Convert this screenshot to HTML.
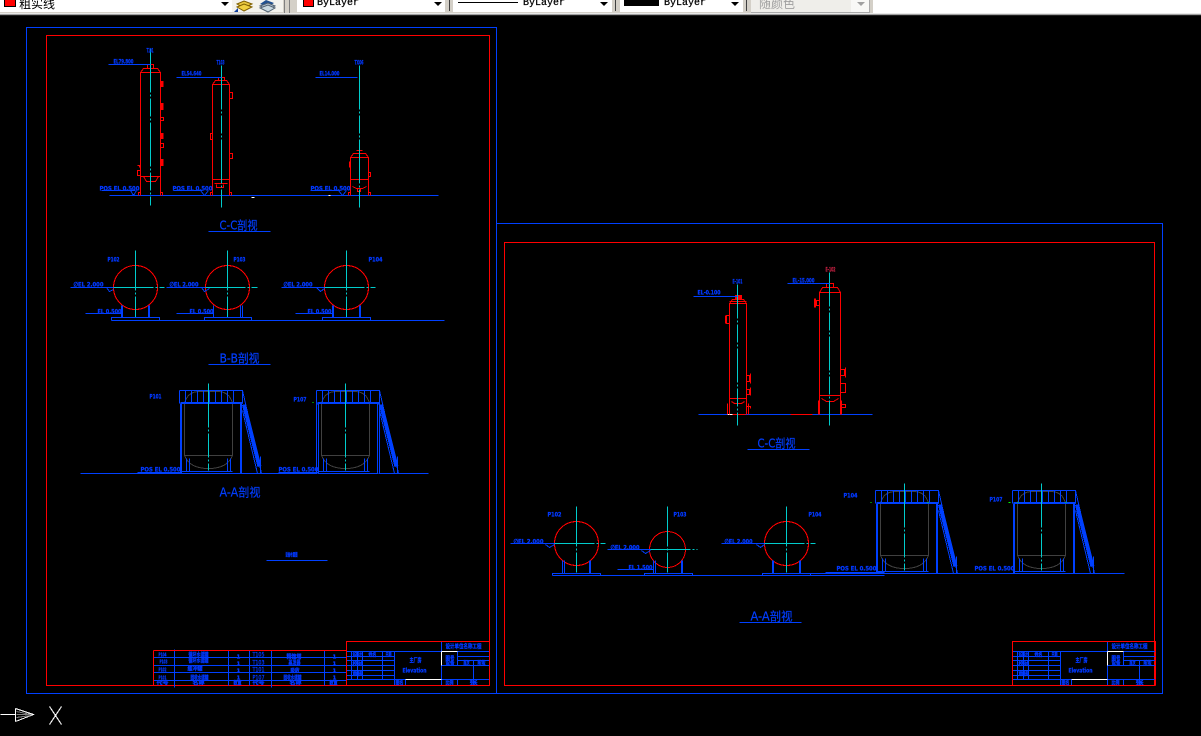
<!DOCTYPE html>
<html lang="zh">
<head>
<meta charset="utf-8">
<title>CAD</title>
<style>
html,body{margin:0;padding:0;background:#000;width:1201px;height:736px;overflow:hidden}
#tb{position:absolute;left:0;top:0;width:1201px;height:16px;background:#fff;overflow:hidden}
#tb div{position:absolute}
.g{background:#d4d0c8}
.w{background:#fff}
.ar{width:0;height:0;border-left:4px solid transparent;border-right:4px solid transparent;border-top:4px solid #000;top:2px}
.bl{font:10px/10px "Liberation Mono",monospace;color:#000;top:-1px;white-space:nowrap;-webkit-text-stroke:.25px #000}
svg{position:absolute;left:0;top:0}
text{font-family:"DejaVu Sans","Noto Sans CJK SC",sans-serif;fill:#0038ff;stroke:#0038ff;stroke-width:.3px;font-size:6.5px;font-weight:bold}
text.t{font-weight:normal;font-size:12px;stroke-width:.2px;fill:#0040ff}
</style>
</head>
<body>
<div id="tb">
  <div class="g" style="left:0;top:0;width:873px;height:14px"></div>
  <div class="w" style="left:0;top:0;width:232px;height:12px"></div>
  <div style="left:4px;top:0;width:10px;height:6px;background:#f00;border:1px solid #000;border-top:0;box-sizing:content-box"></div>
  <div style="left:19px;top:-3px;font:12px/14px 'WenQuanYi Zen Hei','Noto Sans CJK SC',sans-serif;color:#000;white-space:nowrap">粗实线</div>
  <div class="ar" style="left:221px"></div>
  <div style="left:232px;top:0;width:51px;height:12px;background:#f4f3ee"></div>
  <svg width="50" height="14" style="left:232px;top:0">
    <polygon points="5,4 12,1 20,4 12,8" fill="#e8c840" stroke="#806000"/>
    <polygon points="5,7 12,4 20,7 12,11" fill="#f0d040" stroke="#806000"/>
    <polygon points="2,12 6,8 6,12" fill="#1040a0"/>
    <polygon points="28,4 34,0 42,3 36,7" fill="#205090"/>
    <polygon points="28,6 36,3 43,6 36,10" fill="#b8c8d8" stroke="#506070"/>
    <polygon points="28,8 36,5 43,8 36,12" fill="#c8d8e0" stroke="#506070"/>
  </svg>
  <div style="left:284px;top:0;width:1px;height:14px;background:#808080"></div>
  <div style="left:289px;top:0;width:1px;height:14px;background:#808080"></div>
  <div class="w" style="left:297px;top:0;width:148px;height:12px"></div>
  <div style="left:303px;top:0;width:9px;height:6px;background:#f00;border:1px solid #000;border-top:0"></div>
  <div class="bl" style="left:317px">ByLayer</div>
  <div class="ar" style="left:434px"></div>
  <div style="left:449px;top:0;width:1px;height:11px;background:#404040"></div>
  <div class="w" style="left:453px;top:0;width:159px;height:12px"></div>
  <div style="left:458px;top:2px;width:60px;height:1px;background:#000"></div>
  <div class="bl" style="left:523px">ByLayer</div>
  <div class="ar" style="left:600px"></div>
  <div style="left:615px;top:0;width:1px;height:11px;background:#404040"></div>
  <div class="w" style="left:620px;top:0;width:123px;height:12px"></div>
  <div style="left:624px;top:0;width:35px;height:6px;background:#000"></div>
  <div class="bl" style="left:664px">ByLayer</div>
  <div class="ar" style="left:731px"></div>
  <div style="left:746px;top:0;width:1px;height:11px;background:#404040"></div>
  <div style="left:751px;top:0;width:118px;height:12px;background:#efeeea;border-right:1px solid #aaa;border-bottom:1px solid #aaa"></div>
  <div style="left:759px;top:-3px;font:12px/14px 'WenQuanYi Zen Hei','Noto Sans CJK SC',sans-serif;color:#a0a0a0;white-space:nowrap">随颜色</div>
  <div style="left:851px;top:0;width:18px;height:12px;background:#f8f8f6"></div>
  <div class="ar" style="left:857px;border-top-color:#a0a0a0"></div>
  <div style="left:0;top:13px;width:1201px;height:1px;background:#e8e8e8"></div>
  <div style="left:0;top:14px;width:1201px;height:1px;background:#a0a0a0"></div>
  <div style="left:0;top:15px;width:1201px;height:1px;background:#202020"></div>
</div>

<svg width="1201" height="736" viewBox="0 0 1201 736" style="top:0" shape-rendering="crispEdges">
<defs>
  <g id="tank" fill="none">
    <g stroke="#404040">
      <path d="M5,13Q8,1 20,1L38,1Q50,1 53,13L53,65L5,65L5,13"/>
      <path d="M5,65Q10,78 29,78Q48,78 53,65"/>
    </g>
    <g stroke="#0040ff">
      <path d="M0,0H63V13M0,0V13M6,0V13M12,0V13M18,0V13M24,0V13M30,0V13M36,0V13M42,0V13M48,0V13M54,0V13"/>
      <path d="M1,12.5H63" stroke-width="2"/>
      <path d="M1.5,13V83M61.5,13V83" stroke-width="2"/>
      <path d="M7,68V81M10,68V81M48,68V81M51,68V81M2,81H53"/>
      <path d="M63,0L82,83M81,66V83M63,20L78,83"/>
      <path d="M64.5,14L80,76" stroke-width="4"/>
    </g>
    <path d="M29,-7V80" stroke="#00cccc" stroke-dasharray="44 2 2 2 24 2 2 2"/>
  </g>
  <g id="tblock" fill="none">
    <g stroke="#0040ff">
      <path d="M346,651H489M346,656H394M346,660H394M346,665H394M346,670H394M346,675H394M346,679H489"/>
      <path d="M351,651V679M357,651V679M362,651V679M382,651V679M394,651V685M405,679V685M441,641V685M457,651V665M457,679V685M473,660V679"/>
      <path d="M457,656H489M457,660H489M441,665H489"/>
    </g>
    <path d="M405,679H441M441,651H457M441,651V665" stroke="#fff"/>
    <path d="M346,685V641H489V685M346,685H489" stroke="#f00"/>
    <text x="445" y="648" textLength="36" lengthAdjust="spacingAndGlyphs" style="font-size:6px">设计单位名称工程</text>
    <text x="409" y="662" style="font-size:6px" textLength="12" lengthAdjust="spacingAndGlyphs">主厂房</text>
    <text x="402" y="672" style="font-size:6px" textLength="24" lengthAdjust="spacingAndGlyphs">Elevation</text>
    <text x="445" y="660" style="font-size:6px" textLength="9" lengthAdjust="spacingAndGlyphs">图号</text>
    <text x="445" y="664" style="font-size:5px" textLength="9" lengthAdjust="spacingAndGlyphs">设备</text>
    <text x="368" y="656" style="font-size:5px" textLength="8" lengthAdjust="spacingAndGlyphs">姓名</text>
    <text x="385" y="656" style="font-size:5px" textLength="6" lengthAdjust="spacingAndGlyphs">日期</text>
    <text x="352" y="656" style="font-size:5px" textLength="10" lengthAdjust="spacingAndGlyphs">设计</text>
    <text x="352" y="665" style="font-size:5px" textLength="10" lengthAdjust="spacingAndGlyphs">校对</text>
    <text x="352" y="675" style="font-size:5px" textLength="10" lengthAdjust="spacingAndGlyphs">审核</text>
    <text x="395" y="684" style="font-size:5px" textLength="8" lengthAdjust="spacingAndGlyphs">图名</text>
    <text x="445" y="684" style="font-size:5px" textLength="8" lengthAdjust="spacingAndGlyphs">比例</text>
    <text x="469" y="684" style="font-size:5px" textLength="8" lengthAdjust="spacingAndGlyphs">张</text>
    <text x="463" y="664" style="font-size:5px" textLength="6" lengthAdjust="spacingAndGlyphs">版次</text>
    <text x="477" y="664" style="font-size:5px" textLength="8" lengthAdjust="spacingAndGlyphs">阶段</text>
  </g>
</defs>

<g transform="translate(.5,.5)" fill="none">
  <!-- frames -->
  <rect x="26" y="27" width="470" height="666" stroke="#0040ff"/>
  <rect x="46" y="35" width="443" height="650" stroke="#f00"/>
  <path d="M496,223H1162V693H496" stroke="#0040ff"/>
  <rect x="504" y="242" width="650" height="443" stroke="#f00"/>

  <!-- LEFT: C-C vessels -->
  <path d="M109,195H438" stroke="#0040ff"/>
  <g stroke="#f00">
    <path d="M140,195V72H160V195M140,72L143,68H157L160,72M147,68V64H153V68"/>
    <path d="M140,176H160M143,176L146,181H155L158,176"/>
    <path d="M138,195V192H140M160,192H162V195"/>
    <path d="M160.5,81H162.5V86H160.5ZM160.5,103H162.5V109H160.5ZM160.5,133H162.5V138H160.5ZM160.5,159H162.5V165H160.5Z" fill="#f00"/>
    <path d="M160,117H163V120H160M160,143H163V147H160M137,165H139V167M140,170H137V175H140"/>
    <path d="M212,195V84H229V195M212,84L215,80H226L229,84M218,80V77H224V80"/>
    <path d="M229,92H232V98H229M212,133H210V139H212M229,153H232V158H229"/>
    <path d="M212,179H229M214,183H227M216,184V187H223V184"/>
    <path d="M210,195V192H212M229,192H231V195"/>
    <path d="M350,195V157H368V195M350,157L353,153H365L368,157M356,150H362M359,150V153"/>
    <path d="M349,161V167M368,172H370V176H368"/>
    <path d="M350,179H368M352,186L356,188H362L366,186M357,188V191H360V188"/>
    <path d="M348,195V192H350M368,192H370V195"/>
  </g>
  <g stroke="#00cccc" stroke-dasharray="44 2 2 2 18 2 2 2">
    <path d="M150,48V205"/>
    <path d="M221,65V207"/>
    <path d="M359,65V207"/>
  </g>
  <g stroke="#0040ff">
    <path d="M108,64H150M176,77H221M315,77H357"/>
    <path d="M101,190H135M130,190L133,195L136,190M173,190H202M200,190L204,195L208,190M310,190H340M338,190L342,195L346,190"/>
    <path d="M208,231H270"/>
  </g>
  <path d="M251,197H254M328,195H330" stroke="#fff"/>
  <text x="146" y="52" textLength="7" lengthAdjust="spacingAndGlyphs">T101</text>
  <text x="113" y="63" textLength="20" lengthAdjust="spacingAndGlyphs">EL79.800</text>
  <text x="216" y="64" textLength="8" lengthAdjust="spacingAndGlyphs">T103</text>
  <text x="181" y="75" textLength="20" lengthAdjust="spacingAndGlyphs">EL54.640</text>
  <text x="354" y="64" textLength="9" lengthAdjust="spacingAndGlyphs">TX06</text>
  <text x="319" y="75" textLength="20" lengthAdjust="spacingAndGlyphs">EL14.000</text>
  <text x="99" y="190" textLength="40" lengthAdjust="spacingAndGlyphs">POS EL 0.500</text>
  <text x="172" y="190" textLength="40" lengthAdjust="spacingAndGlyphs">POS EL 0.500</text>
  <text x="310" y="190" textLength="40" lengthAdjust="spacingAndGlyphs">POS EL 0.500</text>
  <text class="t" x="219" y="229" textLength="38" lengthAdjust="spacingAndGlyphs">C-C剖视</text>

  <!-- LEFT: B-B -->
  <g stroke="#f00">
    <circle cx="135" cy="287" r="22"/><circle cx="227" cy="287" r="22"/><circle cx="346" cy="287" r="22"/>
  </g>
  <g stroke="#00cccc" stroke-dasharray="40 2 2 2">
    <path d="M135,250V317M227,250V317M346,250V317"/>
    <path d="M113,287H164M205,287H257M324,287H375"/>
  </g>
  <g stroke="#0040ff">
    <path d="M111,320H444"/>
    <path d="M111,320V317H159V320M204,320V317H251V320M322,320V317H370V320"/>
    <path d="M121.5,305V317M148.5,305V317M332.5,305V317M359.5,305V317" stroke-width="2"/>
    <path d="M213,305V317M240,305V317M242,305V317"/>
    <path d="M70,287H113M106,287L109,291L113,289M166,287H205M201,287L204,291L209,288M281,287H324M316,287L320,291L324,288"/>
    <path d="M85,313H122M176,313H213M295,313H333"/>
    <path d="M208,364H270"/>
  </g>
  <text x="107" y="261" textLength="12" lengthAdjust="spacingAndGlyphs">P102</text>
  <text x="233" y="261" textLength="12" lengthAdjust="spacingAndGlyphs">P103</text>
  <text x="368" y="261" textLength="14" lengthAdjust="spacingAndGlyphs">P104</text>
  <text x="73" y="286" textLength="30" lengthAdjust="spacingAndGlyphs">∅EL 2.000</text>
  <text x="169" y="286" textLength="29" lengthAdjust="spacingAndGlyphs">∅EL 2.000</text>
  <text x="283" y="286" textLength="29" lengthAdjust="spacingAndGlyphs">∅EL 2.000</text>
  <text x="97" y="313" textLength="24" lengthAdjust="spacingAndGlyphs">EL 0.500</text>
  <text x="189" y="313" textLength="24" lengthAdjust="spacingAndGlyphs">EL 0.500</text>
  <text x="307" y="313" textLength="24" lengthAdjust="spacingAndGlyphs">EL 0.500</text>
  <text class="t" x="219" y="362" textLength="40" lengthAdjust="spacingAndGlyphs">B-B剖视</text>

  <!-- LEFT: A-A -->
  <path d="M80,473H428" stroke="#0040ff"/>
  <use href="#tank" x="179" y="390"/>
  <use href="#tank" x="316" y="390"/>
  <path d="M317,404V473M378,404V473" stroke="#000"/>
  <path d="M316,403V473M379,403V473" stroke="#0040ff"/>
  <path d="M137,472H180M278,472H318" stroke="#0040ff"/>
  <text x="149" y="398" textLength="12" lengthAdjust="spacingAndGlyphs">P101</text>
  <text x="293" y="401" textLength="13" lengthAdjust="spacingAndGlyphs">P107</text>
  <text x="140" y="471" textLength="40" lengthAdjust="spacingAndGlyphs">POS EL 0.500</text>
  <text x="278" y="471" textLength="40" lengthAdjust="spacingAndGlyphs">POS EL 0.500</text>
  <text class="t" x="219" y="496" textLength="41" lengthAdjust="spacingAndGlyphs">A-A剖视</text>
  <path d="M312,402H313" stroke="#0f0"/>
  <path d="M266,560H327" stroke="#0040ff"/>
  <text x="285" y="556" textLength="12" lengthAdjust="spacingAndGlyphs" style="font-size:5px">设备布置图</text>

  <!-- LEFT: table -->
  <g stroke="#0040ff">
    <path d="M153,657H346M153,665H346M153,672H346M153,680H346"/>
    <path d="M174,649V687M228,650V685M249,650V685M271,650V687M324,650V685"/>
  </g>
  <path d="M153,650H346M153,650V685" stroke="#f00"/>
  <text x="158" y="656" textLength="8" lengthAdjust="spacingAndGlyphs" style="font-size:5.5px">P104</text>
  <text x="159" y="663" textLength="8" lengthAdjust="spacingAndGlyphs" style="font-size:5.5px">P103</text>
  <text x="158" y="671" textLength="8" lengthAdjust="spacingAndGlyphs" style="font-size:5.5px">P102</text>
  <text x="158" y="679" textLength="8" lengthAdjust="spacingAndGlyphs" style="font-size:5.5px">P101</text>
  <text x="156" y="684" textLength="12" lengthAdjust="spacingAndGlyphs" style="font-size:5px">代号</text>
  <text x="188" y="656" textLength="20" lengthAdjust="spacingAndGlyphs" style="font-size:5.5px">循环水储罐</text>
  <text x="188" y="662" textLength="20" lengthAdjust="spacingAndGlyphs" style="font-size:5.5px">循环水储罐</text>
  <text x="187" y="670" textLength="15" lengthAdjust="spacingAndGlyphs" style="font-size:5.5px">缓冲罐</text>
  <text x="190" y="679" textLength="18" lengthAdjust="spacingAndGlyphs" style="font-size:5.5px">回收水储罐</text>
  <text x="192" y="684" textLength="12" lengthAdjust="spacingAndGlyphs" style="font-size:5px">名称</text>
  <text x="236" y="658" style="font-size:5.5px">1</text><text x="236" y="665" style="font-size:5.5px">1</text><text x="236" y="672" style="font-size:5.5px">1</text><text x="236" y="679" style="font-size:5.5px">1</text>
  <text x="233" y="684" textLength="8" lengthAdjust="spacingAndGlyphs" style="font-size:5px">数量</text>
  <text x="252" y="656" textLength="12" lengthAdjust="spacingAndGlyphs" style="font-size:6px;font-weight:normal">T105</text>
  <text x="252" y="664" textLength="12" lengthAdjust="spacingAndGlyphs" style="font-size:6px;font-weight:normal">T103</text>
  <text x="252" y="671" textLength="12" lengthAdjust="spacingAndGlyphs" style="font-size:6px;font-weight:normal">T101</text>
  <text x="252" y="679" textLength="12" lengthAdjust="spacingAndGlyphs" style="font-size:6px;font-weight:normal">P107</text>
  <text x="252" y="684" textLength="12" lengthAdjust="spacingAndGlyphs" style="font-size:5px">代号</text>
  <text x="286" y="658" textLength="15" lengthAdjust="spacingAndGlyphs" style="font-size:5.5px">精馏塔</text>
  <text x="288" y="664" textLength="12" lengthAdjust="spacingAndGlyphs" style="font-size:5.5px">蒸发器</text>
  <text x="290" y="672" textLength="9" lengthAdjust="spacingAndGlyphs" style="font-size:5.5px">吸收</text>
  <text x="283" y="679" textLength="18" lengthAdjust="spacingAndGlyphs" style="font-size:5.5px">回收水储罐</text>
  <text x="289" y="684" textLength="12" lengthAdjust="spacingAndGlyphs" style="font-size:5px">名称</text>
  <text x="332" y="658" style="font-size:5.5px">1</text><text x="332" y="665" style="font-size:5.5px">1</text><text x="332" y="672" style="font-size:5.5px">1</text><text x="332" y="679" style="font-size:5.5px">1</text>
  <text x="329" y="684" textLength="8" lengthAdjust="spacingAndGlyphs" style="font-size:5px">数量</text>
  <use href="#tblock"/>
  <use href="#tblock" x="666"/>

  <!-- RIGHT: C-C vessels -->
  <path d="M698,414H872" stroke="#0040ff"/>
  <path d="M732,414H745M790,414H812" stroke="#f00"/>
  <path d="M727,414H732" stroke="#fff"/>
  <g stroke="#f00">
    <path d="M729,414V303H746V414M729,303L732,299H743L746,303M729,301H746M735,295H741V299H735Z"/>
    <path d="M736,296H740V298H736Z" fill="#f00"/>
    <path d="M729,315H726V323H729M725,315V323"/>
    <path d="M746,375H749V381H746M750,373V383M746,389H749V394H746M750,387V395M746,406H750V408M748,406V410"/>
    <path d="M729,398H746M731,401L734,403H741L744,401M727,403V414M748,403V414"/>
    <path d="M819,414V292H840V414M819,292L822,287H837L840,292M826,283H833V287H826Z"/>
    <path d="M819,300H816V305H819M814,298V307M815,298V307"/>
    <path d="M840,369H844V375H840M845,367V377M840,383H845V392H840M840,404H845V407H840"/>
    <path d="M819,395H840M821,398L826,401H833L838,398M818,400V414M841,400V414"/>
  </g>
  <g stroke="#00cccc" stroke-dasharray="34 2 2 2 18 2 2 2">
    <path d="M737,284V425M829,272V425"/>
  </g>
  <path d="M693,296H737M787,283H829M747,449H809" stroke="#0040ff"/>
  <text x="732" y="283" textLength="10" lengthAdjust="spacingAndGlyphs">E-101</text>
  <text x="825" y="271" textLength="10" lengthAdjust="spacingAndGlyphs" style="fill:#c02040;stroke:#c02040">E-102</text>
  <text x="697" y="294" textLength="23" lengthAdjust="spacingAndGlyphs">EL-0.100</text>
  <text x="792" y="282" textLength="22" lengthAdjust="spacingAndGlyphs">EL-15.000</text>
  <text class="t" x="757" y="447" textLength="38" lengthAdjust="spacingAndGlyphs">C-C剖视</text>

  <!-- RIGHT: A-A -->
  <path d="M552,575H884" stroke="#0040ff"/>
  <path d="M552,575V573H600V575M644,575V573H692V575M762,575V573H810V575M810,573H834" stroke="#0040ff"/>
  <g stroke="#f00">
    <circle cx="576" cy="543" r="22"/><circle cx="667" cy="549" r="18"/><circle cx="786" cy="543" r="22"/>
  </g>
  <g stroke="#00cccc" stroke-dasharray="40 2 2 2">
    <path d="M576,506V572M667,506V572M786,506V572"/>
    <path d="M554,543H605M650,549H697M764,543H815"/>
  </g>
  <g stroke="#0040ff">
    <path d="M562,560V573M564,560V573M653,560V573M655,560V573"/>
    <path d="M589.5,560V573M681.5,560V573M772.5,560V573M799.5,560V573" stroke-width="2"/>
    <path d="M510,543H554M545,544L549,547L554,544M607,549H650M641,550L645,553L650,550M721,543H764M756,544L760,547L764,544M617,569H653"/>
  </g>
  <text x="547" y="516" textLength="14" lengthAdjust="spacingAndGlyphs">P102</text>
  <text x="673" y="516" textLength="13" lengthAdjust="spacingAndGlyphs">P103</text>
  <text x="808" y="516" textLength="13" lengthAdjust="spacingAndGlyphs">P104</text>
  <text x="513" y="543" textLength="30" lengthAdjust="spacingAndGlyphs">∅EL 2.000</text>
  <text x="610" y="549" textLength="29" lengthAdjust="spacingAndGlyphs">∅EL 2.000</text>
  <text x="724" y="543" textLength="28" lengthAdjust="spacingAndGlyphs">∅EL 2.000</text>
  <text x="628" y="569" textLength="24" lengthAdjust="spacingAndGlyphs">EL 1.500</text>
  <text class="t" x="750" y="620" textLength="42" lengthAdjust="spacingAndGlyphs">A-A剖视</text>
  <path d="M739,622H801" stroke="#0040ff"/>

  <path d="M834,573H1124M825,572H884" stroke="#0040ff"/>
  <use href="#tank" x="875" y="490"/>
  <use href="#tank" x="1012" y="490"/>
  <path d="M870,502H871M927,502H928M1008,502H1010M1017,502H1018M1065,502H1066" stroke="#0f0"/>
  <text x="843" y="497" textLength="14" lengthAdjust="spacingAndGlyphs">P104</text>
  <text x="989" y="501" textLength="13" lengthAdjust="spacingAndGlyphs">P107</text>
  <text x="836" y="570" textLength="40" lengthAdjust="spacingAndGlyphs">POS EL 0.500</text>
  <text x="974" y="570" textLength="40" lengthAdjust="spacingAndGlyphs">POS EL 0.500</text>

  <!-- UCS icon -->
  <g stroke="#fff">
    <path d="M0,714H15M15,708V721M15,708L33,714L15,721"/>
    <path d="M49,706L61,724M61,706L49,724"/>
  </g>
  <path d="M16,711L30,714M16,714H31M16,717L30,715" stroke="#808080"/>
</g>
</svg>
</body>
</html>
